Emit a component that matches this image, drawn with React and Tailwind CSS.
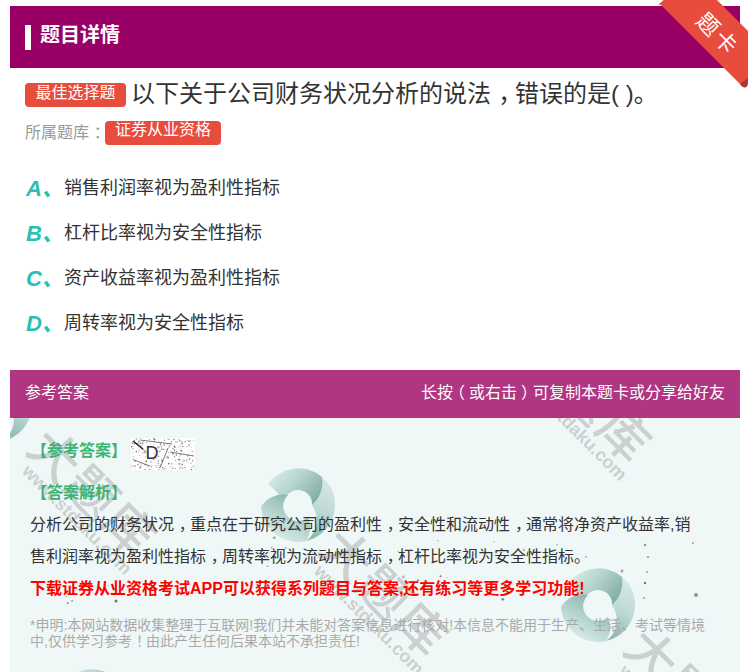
import React from 'react';

const FONT = { fontFamily: '"Liberation Sans", "Noto Sans CJK SC", sans-serif' };

const options = [
  { key: 'A', text: '销售利润率视为盈利性指标' },
  { key: 'B', text: '杠杆比率视为安全性指标' },
  { key: 'C', text: '资产收益率视为盈利性指标' },
  { key: 'D', text: '周转率视为安全性指标' },
];

// the reference centres full-width punctuation in its box, so nudge those glyphs
const NUDGE = {
  '，': 'relative left-[0.3em]',
  '：': 'relative left-[0.3em]',
  '！': 'relative left-[0.3em]',
  '（': 'relative -left-[0.25em]',
  '）': 'relative left-[0.25em]',
};

const Cjk = ({ text }) =>
  text.split(/([，（）：！])/).map((part, i) =>
    i % 2 ? (
      <span key={i} className={NUDGE[part]}>{part}</span>
    ) : (
      part
    )
  );

// seeded specks, so every render gives the same picture
const makeDots = (count, seed, x0, y0, w, h) => {
  let s = seed;
  const next = () => {
    s = (s * 9301 + 49297) % 233280;
    return s / 233280;
  };
  return Array.from({ length: count }, () => ({
    x: x0 + next() * w,
    y: y0 + next() * h,
    r: 0.4 + next() * 1.1,
    o: 0.25 + next() * 0.55,
  }));
};

const specks = [
  ...makeDots(26, 17, 50, 535, 560, 70),
  { x: 696, y: 595, r: 2, o: 0.6 },
  { x: 622, y: 571, r: 1.5, o: 0.5 },
  { x: 116, y: 601, r: 1.5, o: 0.8 },
  { x: 645, y: 545, r: 1.2, o: 0.6 },
  { x: 648, y: 557, r: 1.1, o: 0.6 },
  { x: 645, y: 583, r: 1.2, o: 0.7 },
  { x: 644, y: 598, r: 1.1, o: 0.5 },
  { x: 693, y: 543, r: 0.9, o: 0.6 },
  { x: 647, y: 572, r: 1, o: 0.5 },
  { x: 645, y: 583, r: 0.9, o: 0.5 },
];

const noise = makeDots(260, 41, 131, 438, 64, 32);

const Swirl = ({ className, id }) => (
  <svg viewBox="0 0 76 76" className={className}>
    <defs>
      <linearGradient id={`${id}a`} x1="0" y1="0.1" x2="1" y2="0.7">
        <stop offset="0" stopColor="#dcefeb" />
        <stop offset="0.5" stopColor="#b5d3cd" />
        <stop offset="1" stopColor="#7fada5" />
      </linearGradient>
      <linearGradient id={`${id}b`} x1="0.6" y1="0" x2="0.4" y2="1">
        <stop offset="0" stopColor="#d8e9e6" />
        <stop offset="0.55" stopColor="#bcd8d2" />
        <stop offset="1" stopColor="#8db6ae" />
      </linearGradient>
      <linearGradient id={`${id}c`} x1="0.8" y1="0" x2="0.2" y2="1">
        <stop offset="0" stopColor="#7fada5" />
        <stop offset="0.5" stopColor="#b4d3cd" />
        <stop offset="1" stopColor="#e4f3f0" />
      </linearGradient>
    </defs>
    <path d="M62 10 A37 37 0 0 1 75 38 A37 37 0 0 1 46 74 A26 26 0 0 0 52 38 A30 30 0 0 0 62 10 Z" fill={`url(#${id}b)`} />
    <path d="M8 17 A37 37 0 0 1 62 10 A30 30 0 0 1 52 38 A14 14 0 0 0 24 36 Q18 24 8 17 Z" fill={`url(#${id}a)`} />
    <path d="M28 28 A14 14 0 0 0 48 50 A26 26 0 0 1 46 74 A37 37 0 0 1 1 40 A26 26 0 0 1 28 28 Z" fill={`url(#${id}c)`} />
  </svg>
);

const Watermark = ({ className }) => (
  <div className={`absolute flex flex-col origin-top-left rotate-45 text-[#cbd1d0] ${className}`}>
    <span className="text-[50px] leading-[52px] tracking-[2px] font-medium whitespace-nowrap">大题库</span>
    <span className="text-[18px] leading-[18px] font-bold whitespace-nowrap ml-[13px] -mt-[6px]">www.stdaku.com</span>
  </div>
);

const App = () => {
  return (
    <div className="relative w-[750px] h-[672px] overflow-hidden bg-white" style={FONT}>
      <div className="mx-[10px] w-[730px] pt-[6px]">
        <div className="h-[62px] bg-[#990066] flex items-center pl-[15px]">
          <span className="w-[6px] h-[25px] bg-white mr-[9px] mt-[1px]" />
          <h1 className="text-[20px] font-bold text-white -mt-[5px]">题目详情</h1>
        </div>

        <div className="pl-[15px] pt-[9px] flex items-center h-[43px]">
          <span className="w-[101px] h-[24px] rounded-[4px] bg-[#e74c3c] text-white text-[16px] leading-[20px] text-center mr-[5px] mt-[2px]">最佳选择题</span>
          <span className="text-[24px] text-[#333] whitespace-nowrap"><Cjk text="以下关于公司财务状况分析的说法，错误的是( )。" /></span>
        </div>
        <div className="pl-[15px] flex items-center h-[32px] mt-[6px]">
          <span className="text-[16px] text-[#999]"><Cjk text="所属题库：" /></span>
          <span className="w-[116px] h-[24px] rounded-[4px] bg-[#e74c3c] text-white text-[16px] leading-[18px] text-center">证券从业资格</span>
        </div>

        <div className="pl-[16px] pt-[17px]">
          {options.map((o) => (
            <div key={o.key} className="flex items-center h-[45px]">
              <span className="w-[38px] text-[22px] font-bold italic text-[#2bbfb3] whitespace-nowrap -mt-[1px]">{o.key}、</span>
              <span className="text-[18px] text-[#333]">{o.text}</span>
            </div>
          ))}
        </div>

        <div className="mt-[24px] h-[48px] bg-[#b03582] flex items-center justify-between px-[15px] text-[16px] text-white">
          <span className="-mt-[2px]">参考答案</span>
          <span className="-mt-[2px]"><Cjk text="长按（或右击）可复制本题卡或分享给好友" /></span>
        </div>

        <div className="relative h-[254px] bg-[#eff8f7] overflow-hidden pl-[20px] pr-[20px]">
          {/* watermark layer sits under the text, coordinates are relative to the answer body */}
          <div className="absolute inset-0 pointer-events-none">
            <Swirl id="s1" className="absolute left-[-53px] top-[-51px] w-[76px] h-[76px]" />
            <Swirl id="s2" className="absolute left-[250px] top-[49px] w-[76px] h-[76px]" />
            <Swirl id="s3" className="absolute left-[550px] top-[149px] w-[76px] h-[76px]" />
            <Swirl id="s4" className="absolute left-[43px] top-[250px] w-[76px] h-[76px]" />
            <Watermark className="left-[45px] top-[2px]" />
            <Watermark className="left-[337px] top-[102px]" />
            <Watermark className="left-[540px] top-[-92px]" />
            <Watermark className="left-[642px] top-[202px]" />
            <svg viewBox="10 418 730 254" className="absolute inset-0 w-full h-full">
              {specks.map((d, i) => (
                <circle key={i} cx={d.x} cy={d.y} r={d.r} fill="#555" opacity={d.o} />
              ))}
            </svg>
          </div>

          <div className="relative">
            <div className="flex items-center pt-[20px] h-[52px]">
              <span className="text-[16px] font-bold text-[#3cb371] ml-[1px] -mt-[6px] w-[100px] whitespace-nowrap">【参考答案】</span>
              <span className="relative w-[64px] h-[32px] flex items-center justify-center text-[18px] text-[#333] bg-white">
                <svg viewBox="131 438 64 32" className="absolute inset-0 w-full h-full">
                  {noise.map((d, i) => (
                    <circle key={i} cx={d.x} cy={d.y} r={d.r * 0.55} fill="#333" opacity={d.o} />
                  ))}
                  <path d="M133 441 L146 452 M140 440 L172 444 M168 448 L160 468 M134 460 L150 466 M170 452 L194 456" stroke="#444" strokeWidth="0.7" fill="none" />
                  <path d="M133 441 L143 449" stroke="#222" strokeWidth="1.6" fill="none" />
                </svg>
                <span className="relative -ml-[22px] -mt-[1px]">D</span>
              </span>
            </div>
            <div className="text-[16px] font-bold text-[#3cb371] ml-[1px] mt-[11px] h-[24px] leading-[24px]">【答案解析】</div>
            <p className="text-[16px] leading-[32px] text-[#333] mt-[4px] w-[670px]">
              <Cjk text="分析公司的财务状况，重点在于研究公司的盈利性，安全性和流动性，通常将净资产收益率,销售利润率视为盈利性指标，周转率视为流动性指标，杠杆比率视为安全性指标。" />
            </p>
            <p className="text-[16px] leading-[32px] font-bold text-[#ff0000] whitespace-nowrap">
              下载证券从业资格考试APP可以获得系列题目与答案,还有练习等更多学习功能!
            </p>
            <p className="text-[14px] leading-[16px] text-[#aaa] mt-[12px] w-[680px]">
              <Cjk text="*申明:本网站数据收集整理于互联网!我们并未能对答案信息进行核对!本信息不能用于生产、生活、考试等情境中,仅供学习参考！由此产生任何后果本站不承担责任!" />
            </p>
          </div>
        </div>
      </div>

      {/* corner ribbon */}
      <svg viewBox="0 0 92 90" className="absolute left-[658px] top-0 w-[92px] h-[90px]">
        <path d="M0 5 L6 0 L16 0 Z" fill="#a8392c" />
        <path d="M82 76 L82 84 C84 88 90 90 90 82 L90 70 Z" fill="#a8392c" />
        <path d="M2 4 L6 0 L59 0 L90 31 L90 78 L82 84 Z" fill="#e74c3c" />
      </svg>
      <div className="absolute left-[688px] top-[19px] w-[60px] h-[30px] flex items-center justify-center rotate-45 text-white text-[22px] tracking-[3px] whitespace-nowrap">题卡</div>
    </div>
  );
};

export default App;
